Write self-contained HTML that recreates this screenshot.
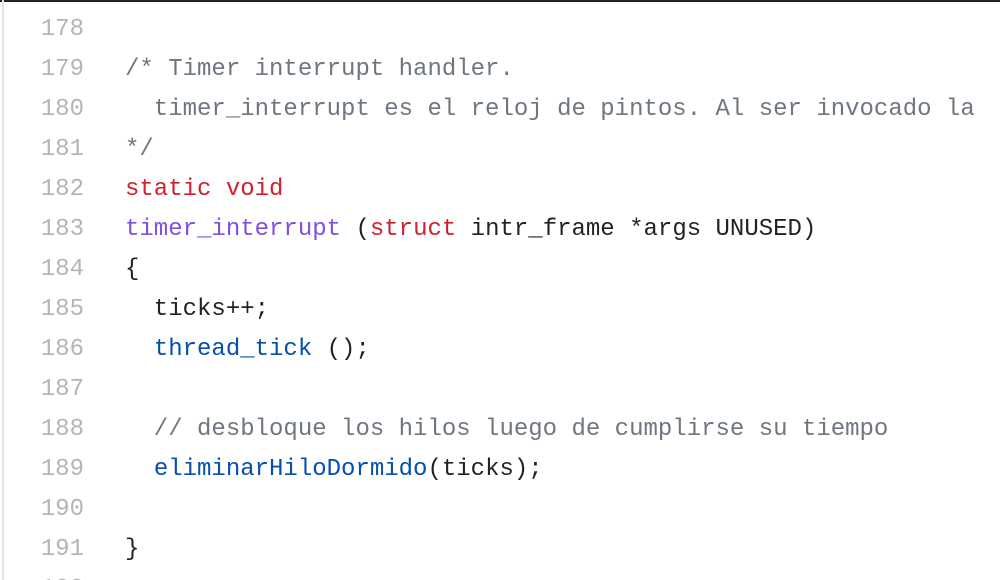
<!DOCTYPE html>
<html><head><style>
html,body{margin:0;padding:0;background:#fff;width:1000px;height:580px;overflow:hidden;position:relative}
.top{position:absolute;left:0;top:0;width:1000px;height:2px;background:#222}
.left{position:absolute;left:2px;top:0;width:2px;height:580px;background:#e1e4e8}
.l{position:absolute;left:0;width:1000px;height:40px;line-height:40px;font-family:"Liberation Mono",monospace;font-size:24px;white-space:pre;color:#1f2328}
.n{position:absolute;left:26px;width:58px;text-align:right;color:#b4b4b4}
.c{position:absolute;left:125px}
.cm{color:#6e7781}.k{color:#cf222e}.f{color:#8250df}.b{color:#0550ae}
</style></head><body>
<div class="top"></div><div class="left"></div>
<div class="l" style="top:10px"><span class="n">178</span><span class="c"></span></div>
<div class="l" style="top:50px"><span class="n">179</span><span class="c cm">/* Timer interrupt handler.</span></div>
<div class="l" style="top:90px"><span class="n">180</span><span class="c cm">  timer_interrupt es el reloj de pintos. Al ser invocado la</span></div>
<div class="l" style="top:130px"><span class="n">181</span><span class="c cm">*/</span></div>
<div class="l" style="top:170px"><span class="n">182</span><span class="c"><span class="k">static</span> <span class="k">void</span></span></div>
<div class="l" style="top:210px"><span class="n">183</span><span class="c"><span class="f">timer_interrupt</span> (<span class="k">struct</span> intr_frame *args UNUSED)</span></div>
<div class="l" style="top:250px"><span class="n">184</span><span class="c">{</span></div>
<div class="l" style="top:290px"><span class="n">185</span><span class="c">  ticks++;</span></div>
<div class="l" style="top:330px"><span class="n">186</span><span class="c">  <span class="b">thread_tick</span> ();</span></div>
<div class="l" style="top:370px"><span class="n">187</span><span class="c"></span></div>
<div class="l" style="top:410px"><span class="n">188</span><span class="c cm">  // desbloque los hilos luego de cumplirse su tiempo</span></div>
<div class="l" style="top:450px"><span class="n">189</span><span class="c">  <span class="b">eliminarHiloDormido</span>(ticks);</span></div>
<div class="l" style="top:490px"><span class="n">190</span><span class="c"></span></div>
<div class="l" style="top:530px"><span class="n">191</span><span class="c">}</span></div>
<div class="l" style="top:570px;height:10px;overflow:hidden"><span class="n">192</span></div>
</body></html>
